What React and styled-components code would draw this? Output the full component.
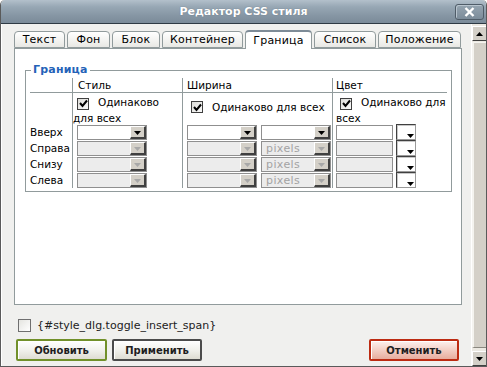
import React from "react";
import styled, { createGlobalStyle } from "styled-components";

const GlobalStyle = createGlobalStyle`
  html, body { margin: 0; padding: 0; background: #ffffff; }
  body { font-family: "DejaVu Sans", Verdana, sans-serif; font-size: 11px; color: #000; }
  * { box-sizing: border-box; }
`;

const Window = styled.div`
  width: 487px;
  height: 367px;
  display: flex;
  flex-direction: column;
  background: #f0f0ee;
  border: 1px solid #5a5a5a;
  border-top: none;
  border-radius: 5px 5px 0 0;
  overflow: hidden;
`;

const TitleBar = styled.div`
  height: 24px;
  flex: none;
  display: flex;
  align-items: center;
  justify-content: center;
  position: relative;
  background: linear-gradient(#b3c0cb 0%, #97a7b4 30%, #8595a3 70%, #7b8b99 100%);
  border-bottom: 1px solid #2e3a44;
  color: #fff;
  font-family: "DejaVu Sans", Verdana, sans-serif;
  font-weight: bold;
  font-size: 11px;
  text-shadow: 0 0 1px #5c6b77;
`;

const CloseButton = styled.div`
  position: absolute;
  right: 2px;
  top: 4px;
  width: 29px;
  height: 16px;
  border: 1px solid #4f5c68;
  border-radius: 3px;
  background: linear-gradient(#95a4b0, #7c8c9a);
  box-shadow: inset 1px 1px 0 #b8c4ce;
  display: flex;
  align-items: center;
  justify-content: center;
`;

const Main = styled.div`
  flex: 1;
  display: flex;
  min-height: 0;
`;

const Body = styled.div`
  flex: 1;
  display: flex;
  flex-direction: column;
  padding: 6px 9px 3px 12px;
  border-left: 1px solid #ffffff;
`;

const TabRow = styled.div`
  display: flex;
  align-items: flex-end;
  gap: 2px;
  height: 18px;
  position: relative;
  z-index: 1;
`;

const Tab = styled.div`
  width: ${(p) => p.$w}px;
  height: ${(p) => (p.$active ? 19 : 17)}px;
  margin-bottom: ${(p) => (p.$active ? -1 : 0)}px;
  border: 1px solid #919b9c;
  border-bottom: ${(p) => (p.$active ? "none" : "1px solid #919b9c")};
  border-top: ${(p) => (p.$active ? "2px solid #7d8b97" : "1px solid #919b9c")};
  border-radius: 4px 4px 0 0;
  background: ${(p) => (p.$active ? "#ffffff" : "linear-gradient(#ffffff, #f2f2ef 60%, #e8e8e4)")};
  display: flex;
  align-items: center;
  justify-content: center;
  font-size: 11px;
  letter-spacing: 0.2px;
  color: #000;
`;

const Panel = styled.div`
  height: 257px;
  flex: none;
  width: 448px;
  background: #ffffff;
  border: 1px solid #919b9c;
  padding: 14px 0 0 10px;
`;

const Fieldset = styled.fieldset`
  margin: 0;
  width: 427px;
  border: 1px solid #919b9c;
  padding: 1px 3px 3px 4px;
`;

const Legend = styled.legend`
  padding: 0 2px;
  margin-left: 1px;
  line-height: 14px;
  color: #2462b8;
  font-weight: bold;
  font-size: 11px;
  letter-spacing: 0.2px;
`;

const Grid = styled.div`
  display: grid;
  grid-template-columns: 42px 110px 150px 115px;
  grid-template-rows: 15px 31px 16px 16px 16px 16px;
  font-size: 10.5px;
`;

const Cell = styled.div`
  border-left: ${(p) => (p.$line ? "1px solid #919b9c" : "none")};
  border-bottom: ${(p) => (p.$head ? "1px solid #919b9c" : "none")};
  padding-left: ${(p) => p.$pad || 0}px;
  line-height: 14px;
  display: flex;
  align-items: ${(p) => (p.$center ? "center" : "flex-start")};
  gap: ${(p) => p.$gap || 0}px;
  white-space: nowrap;
`;

const WrapCell = styled.div`
  border-left: 1px solid #919b9c;
  padding: 1px 0 0 ${(p) => p.$pad}px;
  line-height: 16px;
`;

const CenterCell = styled.div`
  border-left: 1px solid #919b9c;
  padding: 0 0 3px ${(p) => p.$pad}px;
  display: flex;
  align-items: center;
  white-space: nowrap;
`;

const Box = styled.span`
  display: inline-flex;
  align-items: center;
  justify-content: center;
  width: 12px;
  height: 12px;
  margin: 0 9px 0 4px;
  vertical-align: -2px;
  border: 1px solid #3f3f3f;
  background: linear-gradient(135deg, #dcdcd8, #fafafa);
`;

const SelectBox = styled.div`
  width: ${(p) => p.$w}px;
  height: 15px;
  margin-top: 1px;
  display: flex;
  border: 1px solid #8f8f8f;
  background: ${(p) => (p.$off ? "#ececec" : "#ffffff")};
`;

const SelectText = styled.div`
  flex: 1;
  padding-left: 4px;
  line-height: 13px;
  color: #a3a3a3;
  font-size: 11px;
  letter-spacing: 0.4px;
`;

const Arrow = styled.div`
  width: 16px;
  height: 13px;
  background: #d4d0c8;
  border-top: 1px solid #ffffff;
  border-left: 1px solid #ffffff;
  border-right: 2px solid #404040;
  border-bottom: 2px solid #404040;
  display: flex;
  align-items: center;
  justify-content: center;
  padding-top: 1px;
`;

const TextInput = styled.div`
  width: 57px;
  height: 15px;
  margin-top: 1px;
  border: 1px solid #8f8f8f;
  background: ${(p) => (p.$off ? "#ececec" : "#ffffff")};
`;

const ColorButton = styled.div`
  width: 20px;
  height: 16px;
  margin-left: 3px;
  background: #ffffff;
  border-top: 1px solid #404040;
  border-left: 1px solid #404040;
  border-right: 1px solid #9a9a9a;
  border-bottom: 1px solid #9a9a9a;
  box-shadow: inset 1px 1px 0 #c8c8c8;
  display: flex;
  align-items: flex-end;
  justify-content: flex-end;
`;

const ToggleRow = styled.div`
  margin-top: 13px;
  height: 14px;
  display: flex;
  align-items: center;
  gap: 6px;
  padding-left: 4px;
  font-size: 11px;
  color: #222;
  font-family: "DejaVu Sans", Verdana, sans-serif;
`;

const PlainBox = styled.span`
  width: 13px;
  height: 13px;
  border: 1px solid #6f6f6f;
  background: linear-gradient(135deg, #e4e4e0, #ffffff);
`;

const ButtonRow = styled.div`
  margin-top: 7px;
  display: flex;
  align-items: center;
  gap: 5px;
  padding-left: 2px;
`;

const tones = {
  green: { border: "#71902a", bg: "linear-gradient(#ffffff, #f1f1ec 50%, #dedcd2)" },
  gray: { border: "#4b4b4b", bg: "linear-gradient(#ffffff, #f1f1ec 50%, #dedcd2)" },
  red: { border: "#bc2b12", bg: "linear-gradient(#fdf1ee, #f3cfc5 50%, #e7ad9e)" },
};

const Button = styled.div`
  width: ${(p) => p.$w}px;
  height: 22px;
  margin-left: ${(p) => (p.$push ? "auto" : "0")};
  margin-right: ${(p) => (p.$push ? "3px" : "0")};
  border: 2px solid ${(p) => tones[p.$tone].border};
  border-radius: 2px;
  background: ${(p) => tones[p.$tone].bg};
  box-shadow: inset 1px 1px 0 #ffffff;
  display: flex;
  align-items: center;
  justify-content: center;
  font-family: "DejaVu Sans", Verdana, sans-serif;
  font-weight: bold;
  font-size: 10px;
  color: #1e1e1e;
`;

const ScrollBar = styled.div`
  width: 16px;
  flex: none;
  display: flex;
  flex-direction: column;
  background: #ece9e2;
  border-left: 1px solid #ffffff;
  padding-top: 2px;
`;

const ScrollButton = styled.div`
  height: 15px;
  flex: none;
  background: #d4d0c8;
  border-top: 1px solid #ffffff;
  border-left: 1px solid #ffffff;
  border-right: 1px solid #404040;
  border-bottom: 1px solid #404040;
  display: flex;
  align-items: center;
  justify-content: center;
`;

const Thumb = styled.div`
  flex: 1;
  margin: 1px 0 3px;
  background: #d4d0c8;
  border-left: 2px solid #f4f3ef;
  border-top: 1px solid #f4f3ef;
  border-right: 1px solid #8a877f;
  border-bottom: 1px solid #8a877f;
`;

function CheckBox() {
  return (
    <Box>
      <svg width="9" height="9" viewBox="0 0 9 9">
        <path d="M1 4 L3.5 7 L8 1.5" stroke="#000" strokeWidth="2" fill="none" />
      </svg>
    </Box>
  );
}

function DownTriangle({ color = "#000", w = 7 }) {
  return (
    <svg width={w} height="4" viewBox={`0 0 ${w} 4`}>
      <polygon points={`0,0 ${w},0 ${w / 2},4`} fill={color} />
    </svg>
  );
}

function Select({ w, off, text }) {
  return (
    <SelectBox $w={w} $off={off}>
      <SelectText>{text}</SelectText>
      <Arrow>
        <DownTriangle w={7} color={off ? "#a8a8a8" : "#000"} />
      </Arrow>
    </SelectBox>
  );
}

function ColorPick() {
  return (
    <ColorButton>
      <svg width="7" height="4" viewBox="0 0 7 4" style={{ marginBottom: 1, marginRight: 1 }}>
        <polygon points="0,0 7,0 3.5,4" fill="#000" />
      </svg>
    </ColorButton>
  );
}

const tabs = [
  ["Текст", 51],
  ["Фон", 43],
  ["Блок", 48],
  ["Контейнер", 81],
  ["Граница", 67, true],
  ["Список", 62],
  ["Положение", 83],
];

const sides = ["Вверх", "Справа", "Снизу", "Слева"];

export default function App() {
  return (
    <>
      <GlobalStyle />
      <Window>
        <TitleBar>
          Редактор CSS стиля
          <CloseButton>
            <svg width="11" height="10" viewBox="0 0 11 10">
              <path d="M1.5 1 L9.5 9 M9.5 1 L1.5 9" stroke="#fff" strokeWidth="2.4" />
            </svg>
          </CloseButton>
        </TitleBar>
        <Main>
          <Body>
            <TabRow>
              {tabs.map(([label, w, active]) => (
                <Tab key={label} $w={w} $active={active}>
                  {label}
                </Tab>
              ))}
            </TabRow>
            <Panel>
              <Fieldset>
                <Legend>Граница</Legend>
                <Grid>
                  <Cell $head />
                  <Cell $head $line $pad={5}>Стиль</Cell>
                  <Cell $head $line $pad={4}>Ширина</Cell>
                  <Cell $head $line $pad={3}>Цвет</Cell>

                  <Cell />
                  <WrapCell $pad={0}>
                    <CheckBox />
                    Одинаково для всех
                  </WrapCell>
                  <CenterCell $pad={4}>
                    <CheckBox />
                    Одинаково для всех
                  </CenterCell>
                  <WrapCell $pad={3}>
                    <CheckBox />
                    Одинаково для всех
                  </WrapCell>

                  {sides.map((side, i) => (
                    <React.Fragment key={side}>
                      <Cell $center>{side}</Cell>
                      <Cell $line $pad={4}>
                        <Select w={70} off={i > 0} />
                      </Cell>
                      <Cell $line $pad={4} $gap={4}>
                        <Select w={70} off={i > 0} />
                        <Select w={70} off={i > 0} text={i > 0 ? "pixels" : ""} />
                      </Cell>
                      <Cell $line $pad={3}>
                        <TextInput $off={i > 0} />
                        <ColorPick />
                      </Cell>
                    </React.Fragment>
                  ))}
                </Grid>
              </Fieldset>
            </Panel>
            <ToggleRow>
              <PlainBox />
              {"{#style_dlg.toggle_insert_span}"}
            </ToggleRow>
            <ButtonRow>
              <Button $w={91} $tone="green">Обновить</Button>
              <Button $w={90} $tone="gray">Применить</Button>
              <Button $w={90} $tone="red" $push>Отменить</Button>
            </ButtonRow>
          </Body>
          <ScrollBar>
            <ScrollButton>
              <svg width="7" height="4" viewBox="0 0 7 4">
                <polygon points="0,4 7,4 3.5,0" fill="#000" />
              </svg>
            </ScrollButton>
            <Thumb />
            <ScrollButton>
              <DownTriangle />
            </ScrollButton>
          </ScrollBar>
        </Main>
      </Window>
    </>
  );
}
